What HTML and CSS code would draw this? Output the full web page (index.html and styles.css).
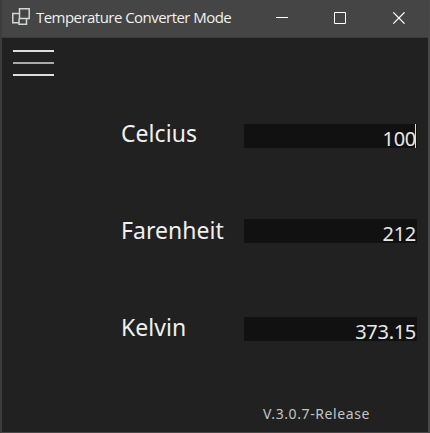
FILE: index.html
```html
<!DOCTYPE html>
<html lang="en">
<head>
<meta charset="utf-8">
<title>Temperature Converter Mode</title>
<link rel="stylesheet" href="styles.css">
</head>
<body>
<div class="window">
  <header class="titlebar">
    <svg class="app-icon" width="18" height="17" viewBox="0 0 18 17"><path d="M7.5 .8h9.7v9.7H7.5zM7.5 5.5H.8v9.2h6.7M7 10.5v5.7h7.5v-5.7"/></svg>
    <span class="title">Temperature Converter Mode</span>
    <svg class="controls" width="130" height="12" viewBox="0 0 130 12"><path d="M0 5.5h12M58.5.5h11v11h-11z"/><path class="close" d="M117.3.4l11.2 11.2M128.5.4l-11.2 11.2"/></svg>
  </header>
  <main class="content">
    <div class="menu"><i></i><i class="mid"></i><i></i></div>
    <div class="row celsius"><label>Celcius</label><div class="field">100<b class="caret"></b></div></div>
    <div class="row fahrenheit"><label>Farenheit</label><div class="field">212</div></div>
    <div class="row kelvin"><label>Kelvin</label><div class="field">373.15</div></div>
    <footer>V.3.0.7-Release</footer>
  </main>
</div>
</body>
</html>
```
FILE: styles.css
```css
* { box-sizing: border-box; }
body { margin: 0; background: #212121; font-family: "Noto Sans", sans-serif; color: #f0f0f0; }
.window { width: 430px; height: 433px; overflow: hidden; border: solid #484848; border-width: 0 2px 1px; border-left-color: #3c3c3c; }
.titlebar { height: 38px; display: flex; align-items: flex-start; background: #454545; border-bottom: 1px solid #3b3b3b; margin: 0 -2px; }
.app-icon { margin: 8px 0 0 12px; fill: none; stroke: #d2d6d5; stroke-width: 1.5; }
.title { margin-left: 6px; width: 240px; white-space: nowrap; font: 15px/34px "Open Sans", sans-serif; letter-spacing: -0.54px; }
.controls { margin-top: 12px; fill: none; stroke: #fff; stroke-width: 1; }
.close { stroke-width: 1.3; }
.menu { display: flex; flex-direction: column; gap: 10px; width: 41px; margin: 12px 0 0 11px; }
.menu i { height: 2px; background: #dedede; }
.menu .mid { background: #aaa; }
.content { height: 394px; display: flex; flex-direction: column; }
.row { display: flex; height: 24px; margin-left: 119px; }
.row label { width: 123px; font-size: 23px; line-height: 19px; letter-spacing: 0.05px; white-space: nowrap; }
.field { position: relative; width: 173px; height: 24px; padding-right: 1px; background: #111; text-align: right; font-size: 20px; line-height: 29px; letter-spacing: -0.3px; color: #e8e8e8; }
.caret { position: absolute; right: 1px; top: 0; width: 1px; height: 24px; background: #ddd; }
.celsius { margin-top: 48px; }
.fahrenheit { margin-top: 71px; }
.fahrenheit label { line-height: 23px; }
.kelvin { margin-top: 74px; }
.kelvin label { line-height: 21px; }
footer { margin: 63px 0 0 261px; font-size: 14px; line-height: 20px; letter-spacing: 0.6px; color: #c4c4c4; }
```
